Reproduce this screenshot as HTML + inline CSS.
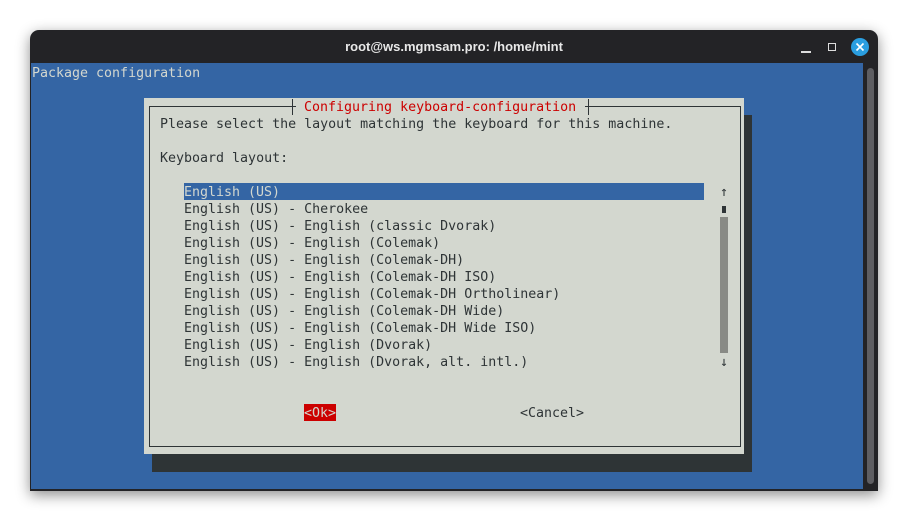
<!DOCTYPE html>
<html><head><meta charset="utf-8"><style>
*{margin:0;padding:0;box-sizing:border-box}
html,body{width:908px;height:521px;background:#fff;overflow:hidden;position:relative}
.win{position:absolute;left:30px;top:30px;width:848px;height:461px;background:#232326;border-radius:9px 9px 0 0;box-shadow:0 4px 14px rgba(0,0,0,.45)}
.term{position:absolute;left:31px;top:63px;width:832px;height:426px;background:#3465a4}
.sb{position:absolute;left:863px;top:63px;width:14px;height:426px;background:#232326}
.sbt{position:absolute;left:867px;top:68px;width:7px;height:416px;background:#5e5e62;border-radius:4px}
.t{position:absolute;font-family:"DejaVu Sans Mono","Liberation Mono",monospace;font-size:13.3px;line-height:17px;white-space:pre;color:#2e3436;margin-top:1px}
.title{position:absolute;left:0;top:39px;width:908px;text-align:center;font-family:"Liberation Sans",sans-serif;font-weight:bold;font-size:13px;color:#e8e8e8}
.dlg{position:absolute;left:144px;top:98px;width:600px;height:356px;background:#d3d7cf}
.shd{position:absolute;left:152px;top:115px;width:600px;height:357px;background:#2e3436}
.bd{position:absolute;left:149px;top:106px;width:592px;height:341px;border:1px solid #2e3436}
</style></head><body>
<div class="win"></div>
<div class="title">root@ws.mgmsam.pro: /home/mint</div>
<div style="position:absolute;left:801px;top:51px;width:10px;height:1.5px;background:#ddd"></div>
<div style="position:absolute;left:828px;top:43px;width:8px;height:8px;border:1.5px solid #ddd"></div>
<div style="position:absolute;left:851px;top:38px;width:18px;height:18px;border-radius:50%;background:#2a9ee0"></div>
<svg style="position:absolute;left:851px;top:38px" width="18" height="18"><path d="M5.5 5.5L12.5 12.5M12.5 5.5L5.5 12.5" stroke="#fff" stroke-width="1.6"/></svg>
<div class="term"></div>
<div class="sb"></div><div class="sbt"></div>
<div class="t" style="left:32px;top:64px;color:#d3d7cf">Package configuration</div>
<div class="shd"></div>
<div class="dlg"></div>
<div class="bd"></div>
<div style="position:absolute;left:292px;top:99px;width:297px;height:16px;background:#d3d7cf;border-left:1px solid #2e3436;border-right:1px solid #2e3436"></div>
<div style="position:absolute;left:292px;top:106px;width:4px;height:1px;background:#2e3436"></div>
<div style="position:absolute;left:585px;top:106px;width:4px;height:1px;background:#2e3436"></div>
<div class="t" style="left:304px;top:98px;color:#cc0000">Configuring keyboard-configuration</div>
<div class="t" style="left:160px;top:115px">Please select the layout matching the keyboard for this machine.</div>
<div class="t" style="left:160px;top:149px">Keyboard layout:</div>
<div style="position:absolute;left:184px;top:183px;width:520px;height:17px;background:#3465a4"></div>
<div class="t" style="left:184px;top:183px;color:#d3d7cf">English (US)</div>
<div class="t" style="left:184px;top:200px">English (US) - Cherokee
English (US) - English (classic Dvorak)
English (US) - English (Colemak)
English (US) - English (Colemak-DH)
English (US) - English (Colemak-DH ISO)
English (US) - English (Colemak-DH Ortholinear)
English (US) - English (Colemak-DH Wide)
English (US) - English (Colemak-DH Wide ISO)
English (US) - English (Dvorak)
English (US) - English (Dvorak, alt. intl.)</div>
<div class="t" style="left:720px;top:183px">↑</div>
<div style="position:absolute;left:722px;top:206px;width:4px;height:7px;background:#2e3436"></div>
<div style="position:absolute;left:720px;top:217px;width:8px;height:136px;background:#888a85"></div>
<div class="t" style="left:720px;top:353px">↓</div>
<div style="position:absolute;left:304px;top:404px;width:32px;height:17px;background:#cc0000"></div>
<div class="t" style="left:304px;top:404px;color:#d3d7cf">&lt;Ok&gt;</div>
<div class="t" style="left:520px;top:404px">&lt;Cancel&gt;</div>
</body></html>
